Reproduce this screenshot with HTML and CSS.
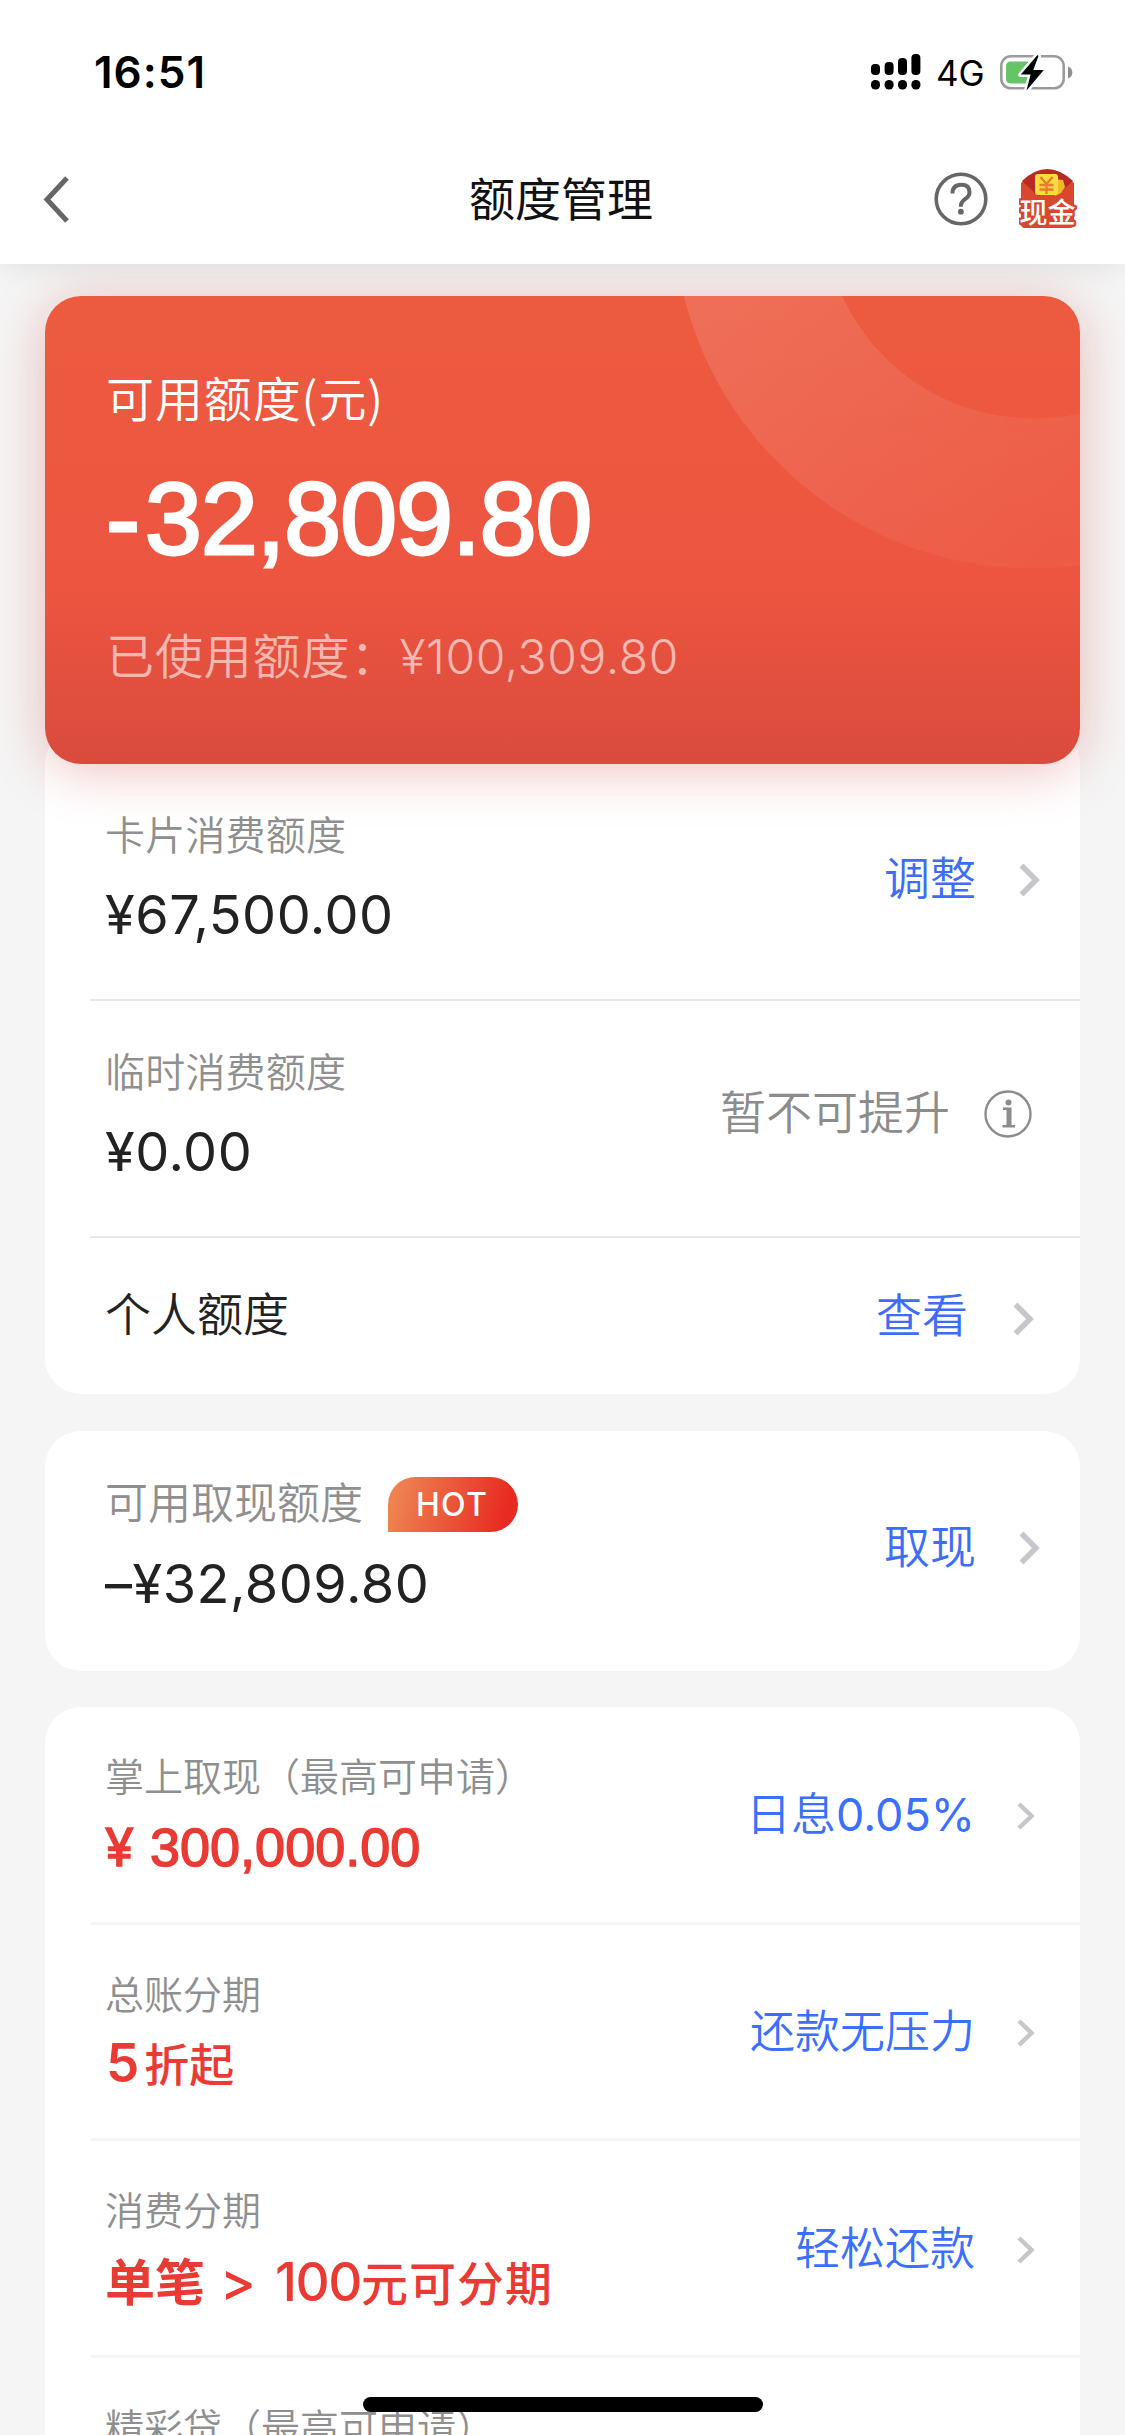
FILE: index.html
```html
<!DOCTYPE html>
<html lang="zh-CN">
<head>
<meta charset="utf-8">
<meta name="viewport" content="width=1125">
<title>额度管理</title>
<link rel="stylesheet" href="styles.css">
</head>
<body>
<div class="screen">
  <header class="top">
    <div class="status">
      <span class="clock">16:51</span>
      <div class="status-right">
        <svg class="signal" width="50" height="36" viewBox="0 0 50 36">
          <rect x="0" y="10" width="9" height="11" rx="4"/><rect x="13.6" y="8" width="9" height="13" rx="4"/><rect x="27" y="4" width="9" height="17" rx="4"/><rect x="40.4" y="0" width="9" height="21" rx="4"/>
          <rect x="0" y="26" width="9" height="9.5" rx="4.2"/><rect x="13.6" y="26" width="9" height="9.5" rx="4.2"/><rect x="27" y="26" width="9" height="9.5" rx="4.2"/><rect x="40.4" y="26" width="9" height="9.5" rx="4.2"/>
        </svg>
        <span class="network">4G</span>
        <svg class="battery" width="74" height="40" viewBox="0 0 74 40">
          <rect x="1.3" y="4.3" width="62.4" height="32" rx="9.5" fill="none" stroke="#9b9b9b" stroke-width="2.6"/>
          <path d="M11 9.5H28V31.5H11Q6 31.5 6 26.500V14.500Q6 9.500 11 9.500Z" fill="#65c466"/>
          <path d="M68 14.500Q72.300 16.200 72.300 20.500T68 26.500Z" fill="#8e8e8e"/>
          <path d="M37.500 3L20.800 22.600H30.600L26.500 38.500L43.800 18H33.300L38.500 4Z" fill="#000" stroke="#fff" stroke-width="5" stroke-linejoin="round" paint-order="stroke"/>
        </svg>
      </div>
    </div>
    <nav class="nav">
      <svg class="back" width="30" height="50" viewBox="0 0 30 50"><path d="M25 4L5 25.500L25 47" fill="none" stroke="#666" stroke-width="5"/></svg>
      <h1 class="title">额度管理</h1>
      <div class="nav-icons">
        <svg width="54" height="54" viewBox="0 0 54 54">
          <circle cx="27" cy="27" r="24.800" fill="none" stroke="#666" stroke-width="3.600"/>
          <path d="M18.500 21.500Q18.500 12.800 27.200 12.800Q35.500 12.800 35.500 20.200Q35.500 24.200 31 27.200Q26.800 30.200 26.800 34.800" fill="none" stroke="#666" stroke-width="4"/>
          <circle cx="26.900" cy="39.700" r="2.900" fill="#666"/>
        </svg>
        <svg width="58" height="60" viewBox="0 0 58 60">
          <path d="M2 14Q28 -12 55 14V55Q55 59 51 59H6Q2 59 2 55Z" fill="#d8482f"/>
          <path d="M3 12Q28 -12 54 12L38 26H18Z" fill="#b82a24"/>
          <path d="M36 10L44 11L46 18L42 24L36 27Z" fill="#f2b92f"/>
          <rect x="16" y="5" width="23" height="21" rx="3" fill="#fbdc3f"/>
          <path d="M21.500 8L27.500 15L33.500 8M20.500 16H34.500M20.500 20.500H34.500M27.500 15V25" fill="none" stroke="#ea7a2e" stroke-width="2.400"/>
          <text class="cash" x="28.500" y="53.500" text-anchor="middle">现金</text>
        </svg>
      </div>
    </nav>
  </header>

  <main class="content">
    <section class="hero">
      <svg class="ring" width="1035" height="468" viewBox="0 0 1035 468">
        <defs><linearGradient id="ringFade" gradientUnits="userSpaceOnUse" x1="680" y1="0" x2="980" y2="290">
          <stop offset="0" stop-color="#fff" stop-opacity=".12"/><stop offset="1" stop-color="#fff" stop-opacity=".03"/>
        </linearGradient></defs>
        <circle cx="988" cy="-87.500" r="285" fill="none" stroke="url(#ringFade)" stroke-width="150"/>
      </svg>
      <p class="hero-label">可用额度(元)</p>
      <p class="hero-amount"><span class="sign">-</span>32,809.80</p>
      <p class="hero-used">已使用额度：<span class="hero-used-num">¥100,309.80</span></p>
    </section>

    <section class="card card-limits">
      <div class="row">
        <div class="info"><p class="label">卡片消费额度</p><p class="value">¥67,500.00</p></div>
        <a class="action">调整<svg class="chev" width="21" height="34" viewBox="0 0 21 34"><path d="M2.500 2.500L17 17L2.500 31.500"/></svg></a>
      </div>
      <div class="row">
        <div class="info"><p class="label">临时消费额度</p><p class="value">¥0.00</p></div>
        <div class="action action-off">暂不可提升<svg width="50" height="50" viewBox="0 0 50 50"><circle cx="25" cy="25" r="22.500" fill="none" stroke="#8c8c8c" stroke-width="2.400"/><circle cx="25.500" cy="13.500" r="3" fill="#8c8c8c"/><path d="M20 18.500H28.500V36H32V38.500H19.500V36H23.500V21H20Z" fill="#8c8c8c"/></svg></div>
      </div>
      <div class="row row-single">
        <p class="single">个人额度</p>
        <a class="action action-view">查看<svg class="chev" width="21" height="34" viewBox="0 0 21 34"><path d="M2.500 2.500L17 17L2.500 31.500"/></svg></a>
      </div>
    </section>

    <section class="card card-cash">
      <div class="row">
        <div class="info"><p class="label label-cash"><span class="label-text">可用取现额度</span><span class="hot">HOT</span></p><p class="value">–¥32,809.80</p></div>
        <a class="action">取现<svg class="chev" width="21" height="34" viewBox="0 0 21 34"><path d="M2.500 2.500L17 17L2.500 31.500"/></svg></a>
      </div>
    </section>

    <section class="card card-offers">
      <div class="row">
        <div class="info"><p class="label">掌上取现（最高可申请）</p><p class="promo promo-num"><span class="yen">¥</span>300,000.00</p></div>
        <a class="action"><span>日息<span class="rate">0.05%</span></span><svg class="chev" width="18" height="28" viewBox="0 0 18 28"><path d="M2 2L14.500 14L2 26"/></svg></a>
      </div>
      <div class="row">
        <div class="info"><p class="label">总账分期</p><p class="promo"><span class="promo-five">5</span>折起</p></div>
        <a class="action">还款无压力<svg class="chev" width="18" height="28" viewBox="0 0 18 28"><path d="M2 2L14.500 14L2 26"/></svg></a>
      </div>
      <div class="row">
        <div class="info"><p class="label">消费分期</p><p class="promo promo-split"><b>单笔</b><span class="gt">&gt;</span><span class="hundred">100</span>元可分期</p></div>
        <a class="action">轻松还款<svg class="chev" width="18" height="28" viewBox="0 0 18 28"><path d="M2 2L14.500 14L2 26"/></svg></a>
      </div>
      <div class="row">
        <div class="info"><p class="label">精彩贷（最高可申请）</p></div>
      </div>
    </section>
  </main>
  <div class="home-bar"></div>
</div>
</body>
</html>
```
FILE: styles.css
```css
* { box-sizing: border-box; }
body, p, h1 { margin: 0; }
body {
  background: #f5f5f5;
  font-family: "Noto Sans CJK SC", sans-serif;
  font-weight: 350;
  color: #222;
}
svg { display: block; flex: none; }

.screen {
  position: relative;
  width: 1125px;
  height: 2435px;
  overflow: hidden;
}

/* Status bar and navigation */
.top {
  position: relative;
  z-index: 2;
  height: 264px;
  background: #fff;
  box-shadow: 0 0 30px rgba(0, 0, 0, .1);
}
.status {
  display: flex;
  justify-content: space-between;
  align-items: center;
  height: 144px;
  padding: 0 51px 0 94px;
  color: #000;
  font-family: Inter, sans-serif;
}
.clock { font-size: 44px; font-weight: 600; letter-spacing: 1px; }
.status-right { display: flex; align-items: center; }
.network { margin: 2px 15px 0 15px; width: 49px; font-size: 35px; font-weight: 400; }
.nav {
  display: flex;
  align-items: center;
  justify-content: space-between;
  height: 110px;
  padding: 0 48px 0 42px;
}
.back { margin-right: 89px; }
.title { margin-top: -6px; font-size: 46px; line-height: 60px; font-weight: 400; color: #111; }
.nav-icons { display: flex; align-items: center; gap: 31px; margin-left: -27px; }
.cash {
  font-size: 28px;
  font-weight: 500;
  fill: #fff;
  stroke: #d8482f;
  stroke-width: 5px;
  stroke-linejoin: round;
  paint-order: stroke;
}

/* Balance card */
.content { padding: 32px 45px 0; }
.hero {
  position: relative;
  z-index: 1;
  height: 468px;
  padding: 65px 61px 0;
  border-radius: 36px;
  background: linear-gradient(#ec5b40, #ed5540 61%, #da4b3d);
  box-shadow: 0 6px 54px rgba(200, 66, 54, .33);
  color: #fff;
}
.ring { position: absolute; inset: 0; border-radius: 36px; }
.hero-label { font-size: 48px; line-height: 70px; letter-spacing: .9px; }
.hero-amount {
  margin-top: 28px;
  font-family: "Liberation Sans", sans-serif;
  font-size: 102px;
  line-height: 120px;
  font-weight: 400;
  letter-spacing: -.8px;
  -webkit-text-stroke: 3px #fff;
}
.sign { letter-spacing: 5px; }
.hero-used { margin-top: 39px; font-size: 48px; line-height: 70px; letter-spacing: .9px; color: rgba(255, 255, 255, .6); }
.hero-used-num { font-family: Inter, sans-serif; letter-spacing: .6px; }

/* Cards */
.card {
  margin-bottom: 36px;
  padding-left: 45px;
  border-radius: 36px;
  background: #fff;
}
.row { display: flex; justify-content: space-between; height: 237px; padding-left: 15px; }
.row + .row { border-top: 2px solid #e8e8e8; }
.label { font-size: 40px; line-height: 56px; letter-spacing: .2px; color: #8f8f8f; }
.value {
  font-family: Inter, sans-serif;
  font-size: 54px;
  font-weight: 370;
  line-height: 70px;
  letter-spacing: .5px;
}
.action {
  display: flex;
  align-items: center;
  gap: 43px;
  height: 60px;
  padding-right: 40px;
  font-size: 46px;
  color: #3d6df6;
}
.action svg { margin-top: 9px; }
.action-off { gap: 33px; padding-right: 47px; color: #8c8c8c; }
.chev { fill: none; stroke: #c7c7cb; stroke-width: 5.5px; }

.card-limits {
  height: 666px;
  margin-top: -36px;
  padding-top: 36px;
}
.card-limits .row:first-child { height: 235px; }
.card-limits .info { padding-top: 41px; }
.card-limits .value { margin-top: 19px; }
.card-limits .action { margin-top: 81px; }
.card-limits .action-off { margin-top: 78px; }
.card-limits .row-single { height: 156px; padding-top: 43px; }
.single { font-size: 46px; line-height: 60px; }
.row-single .action-view { margin-top: 1px; padding-right: 46px; }
.action-view { gap: 45px; }
.row-single .action-view svg { margin-top: 14px; }

.card-cash { height: 240px; margin-top: 37px; }
.card-cash .info { padding-top: 43px; }
.card-cash .action { margin-top: 82px; }
.label-cash { display: flex; align-items: center; height: 60px; font-size: 43px; letter-spacing: 0; }
.label-text { margin-top: -8px; }
.hot {
  margin-left: 25px;
  width: 130px;
  height: 55px;
  border-radius: 28px 28px 28px 0;
  background: linear-gradient(105deg, #ef8b56, #e82b22 88%);
  color: #fff;
  font: 550 32px/55px Inter, sans-serif;
  letter-spacing: 1.3px;
  text-indent: -2px;
  text-align: center;
}
.card-cash .value { margin-top: 15px; }

.card-offers { padding-bottom: 80px; }
.card-offers .row { height: 216.500px; }
.card-offers .row:first-child { height: 214.500px; }
.card-offers .row + .row { border-top: 3px solid #f5f5f5; }
.card-offers .info { padding-top: 39px; }
.card-offers .label { font-size: 39px; line-height: 56px; letter-spacing: 0; }
.card-offers .action { margin-top: 74px; gap: 42px; padding-right: 45px; font-size: 45px; color: #3a70fb; }
.card-offers .chev { stroke-width: 4.500px; margin-top: 9px; }
.rate { font-family: Inter, sans-serif; font-weight: 370; }
.promo {
  display: flex;
  align-items: baseline;
  height: 70px;
  margin-top: 8px;
  font-size: 45px;
  line-height: 70px;
  font-weight: 500;
  color: #e93a34;
}
.promo-num { margin-top: 10px; font-family: "Liberation Sans", sans-serif; font-size: 54px; font-weight: 400; -webkit-text-stroke: 1.500px #e93a34; }
.yen { width: 45px; font-family: Inter, sans-serif; font-size: 52px; }
.promo-five { margin: 0 5px 0 1px; font-family: Inter, sans-serif; font-size: 53px; font-weight: 600; }
.promo-split { font-size: 47px; letter-spacing: 1px; }
.promo-split b { font-size: 50px; font-weight: 700; letter-spacing: 0; }
.gt, .hundred { font-family: Inter, sans-serif; }
.gt { margin: 0 18px 0 15px; font-size: 54px; line-height: 60px; }
.hundred { font-size: 53px; letter-spacing: -1.500px; }

.home-bar {
  position: absolute;
  z-index: 3;
  left: 363px;
  bottom: 23px;
  width: 400px;
  height: 15px;
  border-radius: 8px;
  background: #000;
}
```
